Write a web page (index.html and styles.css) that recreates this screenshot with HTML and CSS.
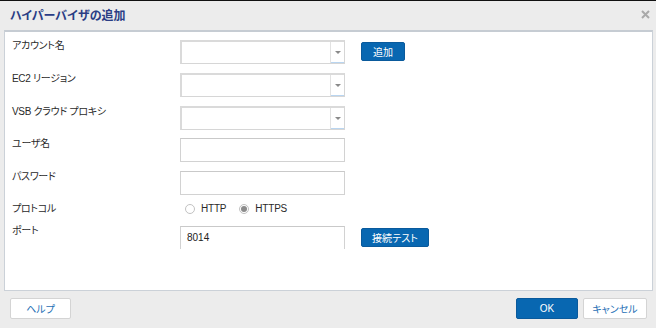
FILE: index.html
```html
<!DOCTYPE html>
<html lang="ja">
<head>
    <meta charset="UTF-8">
    <title>ハイパーバイザの追加</title>
    <link rel="stylesheet" href="styles.css">
</head>
<body>
    <div class="dialog">
        <div class="titlebar">
            <span class="title">ハイパーバイザの追加</span>
            <svg class="close" width="9" height="9" viewBox="0 0 9 9">
                <path d="M1 1 L8 8 M8 1 L1 8" stroke="#a9a9a9" stroke-width="2"/>
            </svg>
        </div>
        <div class="panel">
            <div class="form">
                <div class="row">
                    <label class="label">アカウント名</label>
                    <div class="field"><div class="select"><span class="arrow"></span></div></div>
                    <button class="btn blue add">追加</button>
                </div>
                <div class="row">
                    <label class="label">EC2 リージョン</label>
                    <div class="field"><div class="select"><span class="arrow"></span></div></div>
                </div>
                <div class="row">
                    <label class="label">VSB クラウド プロキシ</label>
                    <div class="field"><div class="select"><span class="arrow"></span></div></div>
                </div>
                <div class="row">
                    <label class="label">ユーザ名</label>
                    <div class="field"><div class="input"></div></div>
                </div>
                <div class="row">
                    <label class="label">パスワード</label>
                    <div class="field"><div class="input"></div></div>
                </div>
                <div class="row radio-row">
                    <label class="label">プロトコル</label>
                    <div class="radios">
                        <span class="radio"></span><span class="radio-text">HTTP</span>
                        <span class="radio checked"></span><span class="radio-text">HTTPS</span>
                    </div>
                </div>
                <div class="row port-row">
                    <label class="label">ポート</label>
                    <div class="field"><div class="input">8014</div></div>
                    <button class="btn blue test">接続テスト</button>
                </div>
            </div>
        </div>
        <div class="footer">
            <button class="btn white help">ヘルプ</button>
            <div class="footer-right">
                <button class="btn blue ok">OK</button>
                <button class="btn white cancel">キャンセル</button>
            </div>
        </div>
    </div>
</body>
</html>
```

FILE: styles.css
```css
body {
    margin: 0;
    font-family: "Liberation Sans", "Noto Sans CJK JP", sans-serif;
    font-feature-settings: "palt";
    background-color: #ececec;
    color: #222;
}
.dialog {
    width: 656px;
    height: 328px;
    box-sizing: border-box;
    border-top: 1px solid #111;
    background-color: #ececec;
    display: flex;
    flex-direction: column;
}
.titlebar {
    height: 29px;
    display: flex;
    align-items: center;
    justify-content: space-between;
    padding: 0 6px 0 10px;
}
.title {
    font-size: 12px;
    font-weight: bold;
    color: #2a3d85;
    margin-top: -2px;
}
.close {
    margin-top: -2px;
}
.panel {
    margin: 0 3px 0 4px;
    height: 258px;
    background: white;
    border: 1px solid #cbd1d8;
    border-top: 2px solid #c6ccd3;
}
.form {
    height: 217px;
    overflow: hidden;
    padding: 8px 0 0 7px;
    box-sizing: border-box;
}
.row {
    display: flex;
    align-items: flex-start;
    height: 24px;
    margin-bottom: 9px;
}
.row:nth-child(3) {
    margin-bottom: 8px;
}
.label {
    width: 168px;
    font-size: 10px;
    line-height: 10px;
    letter-spacing: -0.3px;
    padding-top: 1px;
    color: #2a2a2a;
}
.field {
    width: 165px;
}
.select, .input {
    height: 24px;
    box-sizing: border-box;
    border: 1px solid #d2d2d2;
    border-top-color: #c9c9c9;
    position: relative;
    font-size: 10px;
    line-height: 22px;
    padding-left: 6px;
}
.select {
    border-width: 2px 1px 1px 2px;
    border-color: #dadada #d6d6d6 #d6d6d6 #dadada;
}
.arrow {
    position: absolute;
    right: 0;
    top: 0;
    bottom: 0;
    width: 13px;
    border-left: 1px solid #e2e2e2;
    box-shadow: inset 0 -1px 0 #b9d5f0;
}
.arrow::after {
    content: "";
    position: absolute;
    left: 4px;
    top: 9px;
    border-left: 3px solid transparent;
    border-right: 3px solid transparent;
    border-top: 3px solid #8a8a8a;
}
.btn {
    font-family: "Liberation Sans", "Noto Sans CJK JP", sans-serif;
    font-feature-settings: "palt";
    font-size: 10px;
    border-radius: 2px;
    padding: 0;
    cursor: pointer;
}
.blue {
    background-color: #0867b1;
    border: 1px solid #0a5a9c;
    color: white;
}
.white {
    background-color: white;
    border: 1px solid #d4d4d4;
    color: #1f6fb5;
}
.add {
    width: 44px;
    height: 19px;
    margin: 2px 0 0 16px;
}
.test {
    width: 68px;
    height: 19px;
    margin: 2px 0 0 16px;
}
.radio-row {
    height: 14px;
    margin-bottom: 9px;
    margin-top: -1px;
}
.radios {
    display: flex;
    align-items: center;
    font-size: 10px;
    margin-left: 5px;
}
.radio {
    width: 10px;
    height: 10px;
    border: 1px solid #c2c2c2;
    border-radius: 50%;
    box-sizing: border-box;
    margin-right: 6px;
    position: relative;
}
.radio.checked::after {
    content: "";
    position: absolute;
    left: 1px;
    top: 1px;
    width: 6px;
    height: 6px;
    border-radius: 50%;
    background: #8c8c8c;
}
.radio-text {
    margin-right: 13px;
    letter-spacing: -0.2px;
    color: #2a2a2a;
}
.port-row .label {
    padding-top: 0;
}
.footer {
    flex: 1;
    display: flex;
    justify-content: space-between;
    align-items: flex-start;
    padding: 7px 9px 0 10px;
}
.footer-right {
    display: flex;
    gap: 5px;
}
.help {
    width: 61px;
    height: 21px;
}
.ok {
    width: 62px;
    height: 21px;
}
.cancel {
    width: 64px;
    height: 21px;
}
```
